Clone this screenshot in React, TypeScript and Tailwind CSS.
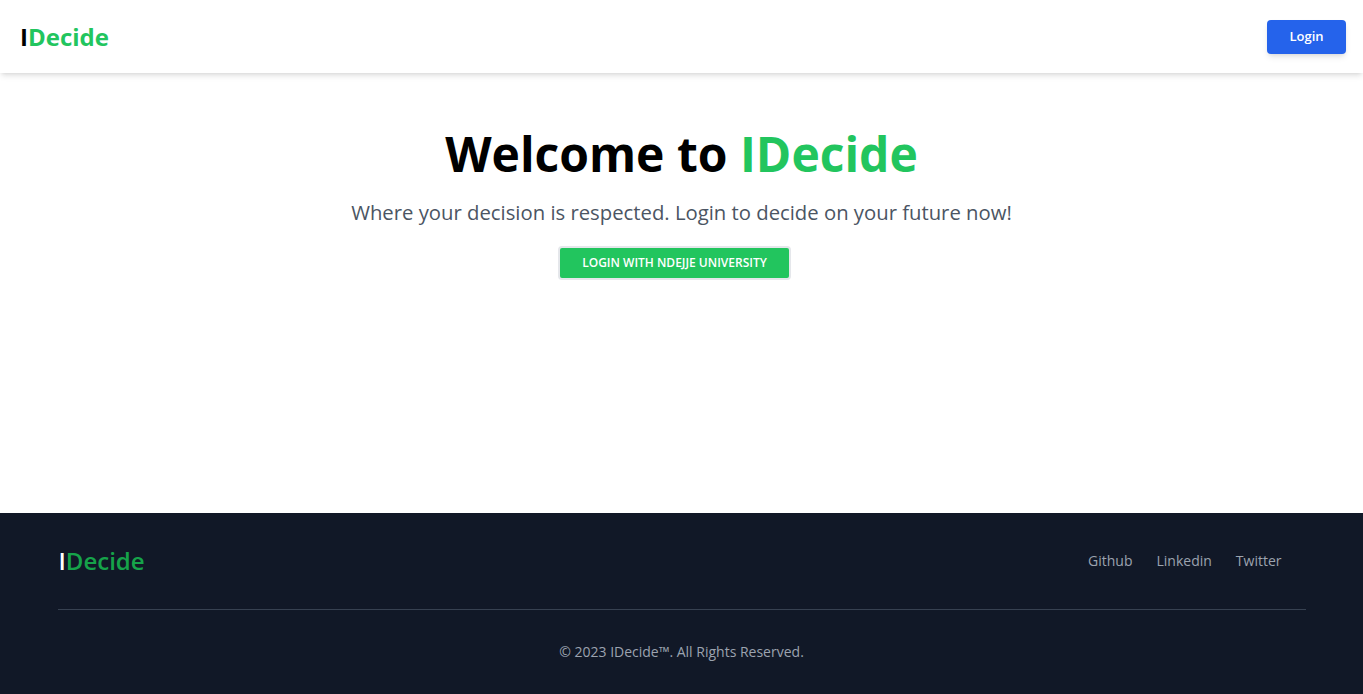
const Logo = ({ dark }: { dark?: boolean }) => {
  return (
    <span className="text-2xl font-semibold whitespace-nowrap">
      <span className={dark ? "text-white" : "text-black"}>I</span>
      <span className={dark ? "text-[#16a34a]" : "text-[#22c55e]"}>Decide</span>
    </span>
  );
};

export default function App() {
  return (
    <div className="min-h-screen flex flex-col bg-white font-['Open_Sans',sans-serif]">
      {/* Navbar */}
      <header className="h-[73px] flex items-center justify-between pl-5 pr-[17px] bg-white shadow-md">
        <a href="#">
          <span className="text-2xl font-bold">
            <span className="text-black">I</span>
            <span className="text-[#22c55e]">Decide</span>
          </span>
        </a>
        <button className="w-[79px] h-[34px] rounded bg-[#2563eb] text-white text-[13px] font-semibold shadow-md">
          Login
        </button>
      </header>

      {/* Hero */}
      <main className="flex-1 flex flex-col items-center pt-[49px]">
        <h1 className="text-5xl font-bold text-black leading-[64px]">
          Welcome to <span className="text-[#22c55e]">IDecide</span>
        </h1>
        <p className="mt-[12px] text-[20.3px] leading-7 text-[#4b5563]">
          Where your decision is respected. Login to decide on your future now!
        </p>
        <button className="mt-[20px] mr-[14px] w-[233px] h-[34px] rounded-sm bg-[#22c55e] border-2 border-[#e5e7eb] text-white text-xs font-semibold uppercase">
          Login with Ndejje University
        </button>
      </main>

      {/* Footer */}
      <footer className="bg-[#111827]">
        <div className="w-full max-w-screen-xl mx-auto p-4 md:py-8">
          <div className="flex items-center justify-between">
            <a href="#" className="ml-px">
              <Logo dark />
            </a>
            <ul className="flex items-center text-sm font-medium text-[#9ca3af]">
              <li>
                <a href="#" className="mr-6 hover:underline">Github</a>
              </li>
              <li>
                <a href="#" className="mr-6 hover:underline">Linkedin</a>
              </li>
              <li>
                <a href="#" className="mr-6 hover:underline">Twitter</a>
              </li>
            </ul>
          </div>
          <hr className="my-8 border-[#374151]" />
          <span className="block text-sm text-[#9ca3af] text-center">
            © 2023 IDecide™. All Rights Reserved.
          </span>
        </div>
      </footer>
    </div>
  );
}
